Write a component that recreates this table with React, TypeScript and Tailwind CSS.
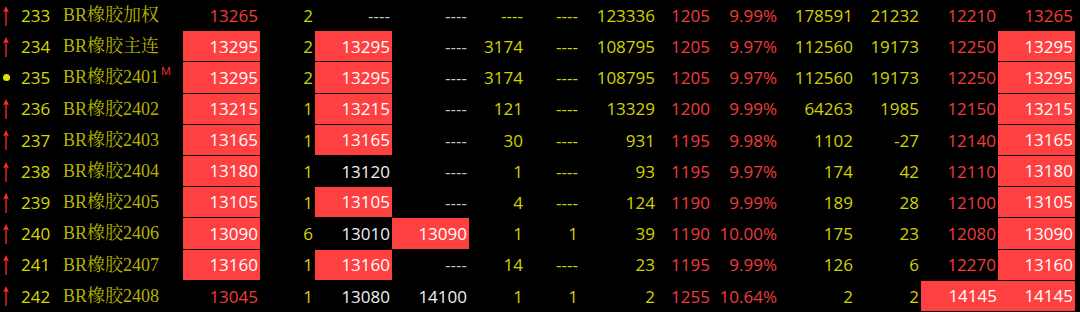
import React from "react";

type Cell = { t: string; c: "r" | "y" | "w" | "g" | "box" };

const R = (t: string): Cell => ({ t, c: "r" });
const Y = (t: string): Cell => ({ t, c: "y" });
const W = (t: string): Cell => ({ t, c: "w" });
const G = (t: string): Cell => ({ t, c: "g" });
const B = (t: string): Cell => ({ t, c: "box" });

type Row = { mark: "up" | "dot"; idx: string; name: string; m?: boolean; cells: Cell[] };

const rows: Row[] = [
  { mark: "up", idx: "233", name: "BR橡胶加权", cells: [R("13265"), Y("2"), G("----"), G("----"), Y("----"), Y("----"), Y("123336"), R("1205"), R("9.99%"), Y("178591"), Y("21232"), R("12210"), R("13265")] },
  { mark: "up", idx: "234", name: "BR橡胶主连", cells: [B("13295"), Y("2"), B("13295"), G("----"), Y("3174"), Y("----"), Y("108795"), R("1205"), R("9.97%"), Y("112560"), Y("19173"), R("12250"), B("13295")] },
  { mark: "dot", idx: "235", name: "BR橡胶2401", m: true, cells: [B("13295"), Y("2"), B("13295"), G("----"), Y("3174"), Y("----"), Y("108795"), R("1205"), R("9.97%"), Y("112560"), Y("19173"), R("12250"), B("13295")] },
  { mark: "up", idx: "236", name: "BR橡胶2402", cells: [B("13215"), Y("1"), B("13215"), G("----"), Y("121"), Y("----"), Y("13329"), R("1200"), R("9.99%"), Y("64263"), Y("1985"), R("12150"), B("13215")] },
  { mark: "up", idx: "237", name: "BR橡胶2403", cells: [B("13165"), Y("1"), B("13165"), G("----"), Y("30"), Y("----"), Y("931"), R("1195"), R("9.98%"), Y("1102"), Y("-27"), R("12140"), B("13165")] },
  { mark: "up", idx: "238", name: "BR橡胶2404", cells: [B("13180"), Y("1"), W("13120"), G("----"), Y("1"), Y("----"), Y("93"), R("1195"), R("9.97%"), Y("174"), Y("42"), R("12110"), B("13180")] },
  { mark: "up", idx: "239", name: "BR橡胶2405", cells: [B("13105"), Y("1"), B("13105"), G("----"), Y("4"), Y("----"), Y("124"), R("1190"), R("9.99%"), Y("189"), Y("28"), R("12100"), B("13105")] },
  { mark: "up", idx: "240", name: "BR橡胶2406", cells: [B("13090"), Y("6"), W("13010"), B("13090"), Y("1"), Y("1"), Y("39"), R("1190"), R("10.00%"), Y("175"), Y("23"), R("12080"), B("13090")] },
  { mark: "up", idx: "241", name: "BR橡胶2407", cells: [B("13160"), Y("1"), B("13160"), G("----"), Y("14"), Y("----"), Y("23"), R("1195"), R("9.99%"), Y("126"), Y("6"), R("12270"), B("13160")] },
  { mark: "up", idx: "242", name: "BR橡胶2408", cells: [R("13045"), Y("1"), W("13080"), W("14100"), Y("1"), Y("1"), Y("2"), R("1255"), R("10.64%"), Y("2"), Y("2"), B("14145"), B("14145")] },
];

function Arrow() {
  return (
    <svg width="10" height="20" viewBox="0 0 10 20">
      <line x1="5" y1="3" x2="5" y2="20" stroke="#ff2a2a" strokeWidth="1.3" />
      <path d="M5 0 L8 6.5 L5 5 L2 6.5 Z" fill="#ff2a2a" />
    </svg>
  );
}

function CellView({ cell, last }: { cell: Cell; last?: boolean }) {
  if (cell.c === "box") {
    return (
      <div className="h-full pb-px">
        <div className={`h-full bg-[#ff4040] text-white flex items-center justify-end ${last ? "pr-[1px]" : "pr-[2px]"}`}>{cell.t}</div>
      </div>
    );
  }
  const col =
    cell.c === "r" ? "text-[#f03c3c]" : cell.c === "y" ? "text-[#d2d200]" : cell.c === "w" ? "text-[#f0f0f0]" : "text-[#c4c4c4]";
  return <div className={`h-full flex items-center justify-end pr-[2px] ${col}`}>{cell.t}</div>;
}

export default function App() {
  return (
    <div className="w-[1080px] h-[312px] bg-black overflow-hidden" style={{ fontFamily: '"Open Sans", "Noto Sans", sans-serif' }}>
      {rows.map((row) => (
        <div
          key={row.idx}
          className="grid h-[31.2px] text-[17px] grid-cols-[18px_34px_131px_77px_55px_77px_77px_56px_55px_77px_55px_67px_76px_66px_77px_77px]"
        >
          <div className="flex items-center justify-start pl-[1px]">
            {row.mark === "up" ? <Arrow /> : <div className="ml-[2px] w-[7px] h-[7px] rounded-full bg-[#e0e000]" />}
          </div>
          <div className="flex items-center pl-[3px] text-[#d8d800]">{row.idx}</div>
          <div className="relative flex items-center pl-[11px] text-[18px] text-[#b4b400]" style={{ fontFamily: '"Liberation Serif", "Noto Serif CJK SC", "Noto Sans CJK SC", serif' }}>
            {row.name}
            {row.m && <span className="absolute left-[109px] top-[1px] text-[11px] text-[#ff3030]" style={{ fontFamily: '"Open Sans", sans-serif' }}>M</span>}
          </div>
          {row.cells.map((c, i) => (
            <CellView key={i} cell={c} last={i === 11} />
          ))}
        </div>
      ))}
    </div>
  );
}
